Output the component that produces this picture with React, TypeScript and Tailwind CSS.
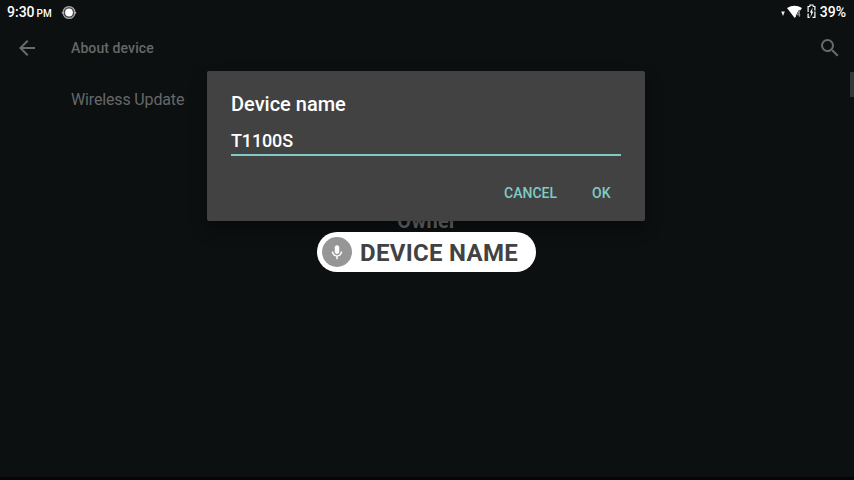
import React from 'react';

function StatusBar() {
  return (
    <header className="flex h-6 items-center justify-between pr-2 pl-[7px] text-white">
      <div className="flex items-center">
        <span className="text-[14px] leading-6 font-medium">9:30</span>
        <span className="ml-[2px] pt-[3px] text-[10px] leading-5 font-medium">PM</span>
        <svg className="ml-[9px]" width="16" height="16" viewBox="0 0 16 16">
          <circle cx="8" cy="8.5" r="5.9" fill="#3c3e3e" stroke="#a5a5a5" strokeWidth="1.3" />
          <path d="M.8 8.8h2.4M12.8 8.8h2.4" stroke="#b5b5b5" strokeWidth="1.6" />
          <circle cx="8" cy="8.5" r="3.9" fill="#fff" />
        </svg>
      </div>
      <div className="flex items-center">
        <svg width="22" height="16" viewBox="0 0 22 16">
          <path d="M.2 7.5h3.6L2 12z" fill="#eee" />
          <path d="M6 4q7.5-4.4 15 0L13.7 14z" fill="#fff" />
          <path d="M18.5 6.4v6.8M18.5 6.4l-2.6 4.6h4" fill="none" stroke="#0d1112" strokeWidth="1.4" />
          <path d="M18.3 6.8v6M18.3 7l-2.1 3.8h3.2" fill="none" stroke="#aaa" strokeWidth="0.9" />
        </svg>
        <svg className="ml-[4px]" width="9" height="16" viewBox="0 0 9 16">
          <path d="M3 2.5V1h3v1.5M3 2.5H1.1V8M6 2.5h1.9v4M1.1 9.5v3.9h1.6M7.9 7.5v5.9H5.5" fill="none" stroke="#fff" strokeWidth="1.2" />
          <path d="M5.8 3.6 2.8 8.6h1.5l-.9 4.6 2.9-5.6H4.9z" fill="#fff" />
        </svg>
        <span className="ml-[4px] text-[14px] leading-6 font-medium">39%</span>
      </div>
    </header>
  );
}

function SettingsPage() {
  return (
    <main className="flex flex-1 flex-col text-[#666868]">
      <div className="flex h-12 items-center">
        <svg className="ml-[15px]" width="24" height="24" viewBox="0 0 24 24" fill="#696b6b">
          <path d="M20 11H7.83l5.59-5.59L12 4l-8 8 8 8 1.41-1.41L7.83 13H20v-2z" />
        </svg>
        <h1 className="ml-8 text-[14px] leading-5 font-medium tracking-[0.1px]">About device</h1>
        <svg className="mr-3 ml-auto" width="24" height="24" viewBox="0 0 24 24" fill="#696b6b">
          <path d="M15.5 14h-.79l-.28-.27A6.47 6.47 0 0 0 16 9.5 6.5 6.5 0 1 0 9.5 16c1.61 0 3.09-.59 4.23-1.57l.27.28v.79l5 4.99L20.49 19l-4.99-5zm-6 0C7.01 14 5 11.99 5 9.5S7.01 5 9.5 5 14 7.01 14 9.5 11.99 14 9.5 14z" />
        </svg>
      </div>
      <div className="flex items-start justify-between">
        <p className="mt-4 ml-[71px] text-[16px] leading-6 tracking-[-0.15px]">Wireless Update</p>
        <div className="h-[25px] w-1 bg-[#343638]" />
      </div>
      <p className="mt-[97px] text-center text-[20px] leading-6 font-bold tracking-[0.3px]">Owner</p>
    </main>
  );
}

function DeviceNameDialog() {
  return (
    <section className="absolute top-[71px] left-[207px] flex h-[150px] w-[438px] flex-col rounded-[2px] bg-[#424242] px-6 shadow-[0_8px_16px_rgba(0,0,0,0.35)]">
      <h2 className="mt-[21px] text-[20px] leading-6 font-medium text-white">Device name</h2>
      <div className="mt-[13px] h-[27px] border-b-2 border-[#80cbc4] text-[18px] leading-6 font-medium tracking-[-0.15px] text-white">T1100S</div>
      <div className="mt-[25px] flex justify-end gap-[35px] pr-[10.5px] text-[14px] leading-6 font-medium text-[#80cbc4]">
        <button>CANCEL</button>
        <button>OK</button>
      </div>
    </section>
  );
}

function VoiceLabel() {
  return (
    <div className="absolute top-[232px] left-[317px] flex h-10 w-[219px] items-center rounded-full bg-white pl-[5px]">
      <span className="flex size-[30px] shrink-0 items-center justify-center rounded-full bg-[#969696]">
        <svg width="18" height="18" viewBox="0 0 24 24" fill="#fff">
          <path d="M12 14.5c1.66 0 3-1.34 3-3V6c0-1.66-1.34-3-3-3S9 4.34 9 6v5.5c0 1.66 1.34 3 3 3zm5-3.2c0 3-2.3 5-5 5s-5-2-5-5H5c0 3.7 2.72 6.2 6 6.7V21.5h2V18c3.28-.5 6-3 6-6.7h-2z" />
        </svg>
      </span>
      <span className="mt-[2px] ml-2 text-[24px] leading-10 font-bold tracking-[0.3px] whitespace-nowrap text-[#424242]">DEVICE NAME</span>
    </div>
  );
}

export default function App() {
  return (
    <div className="relative flex h-[480px] w-[854px] flex-col overflow-hidden bg-[#0c1011] font-[Roboto,sans-serif]">
      <StatusBar />
      <SettingsPage />
      <footer className="h-[3px] bg-[#080409]" />
      <DeviceNameDialog />
      <VoiceLabel />
    </div>
  );
}
